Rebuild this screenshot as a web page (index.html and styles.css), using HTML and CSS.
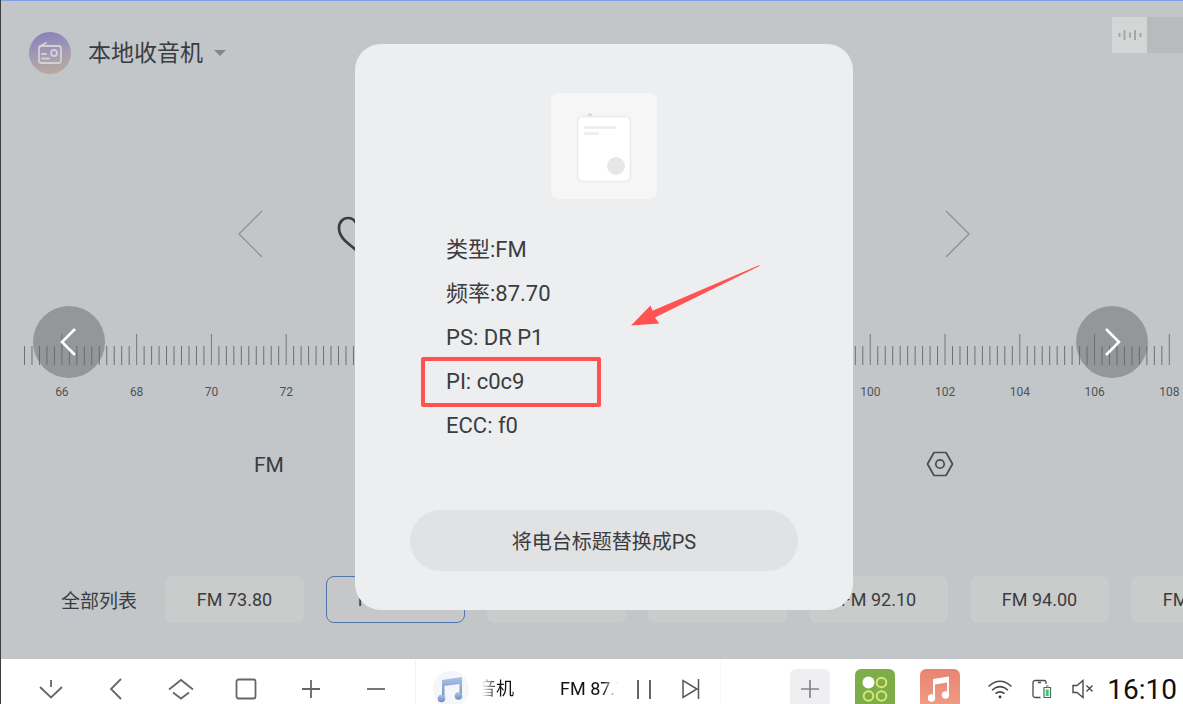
FILE: index.html
```html
<!DOCTYPE html>
<html lang="zh-CN">
<head>
    <meta charset="UTF-8">
    <meta name="viewport" content="width=device-width, initial-scale=1.0">
    <title>本地收音机</title>
    <link rel="stylesheet" href="styles.css">
</head>
<body>
    <main class="screen">
        <header class="header">
            <div class="brand">
                <svg class="brand-logo" viewBox="0 0 42 42" aria-hidden="true">
                    <defs>
                        <linearGradient id="logoFill" x1="0.4" y1="0" x2="0.6" y2="1">
                            <stop offset="0" stop-color="#8a80bd"/>
                            <stop offset="0.5" stop-color="#a39ab2"/>
                            <stop offset="1" stop-color="#bbaa9a"/>
                        </linearGradient>
                    </defs>
                    <circle cx="21" cy="21" r="21" fill="url(#logoFill)"/>
                    <g fill="none" stroke="#d2d0d8" stroke-width="1.8" stroke-linecap="round" stroke-linejoin="round">
                        <rect x="10" y="14" width="22" height="17" rx="2.5"/>
                        <path d="M11 14l6-3M13 22h4M13 26.500h7"/>
                        <circle cx="25" cy="21" r="3"/>
                    </g>
                </svg>
                <select class="source-select" aria-label="音源">
                    <option>本地收音机</option>
                </select>
                <svg class="caret" viewBox="0 0 12 6" aria-hidden="true"><path d="M0 0h12L6 6z" fill="#85888b"/></svg>
            </div>
            <div class="view-switch">
                <button class="view-btn active" type="button" aria-label="波形">
                    <svg width="24" height="12" viewBox="0 0 24 12"><path d="M1.500 4v4M6.500 1v10M12 3.500v5M17 1v10M22.500 4v4" stroke="#a3a5a8" stroke-width="2"/></svg>
                </button>
                <button class="view-btn" type="button" aria-label="列表"></button>
            </div>
        </header>

        <section class="station">
            <button class="icon-btn" type="button" aria-label="上一台">
                <svg width="26" height="48" viewBox="0 0 26 48"><path d="M25 1L2 24l23 23" fill="none" stroke="#93979a" stroke-width="1.500"/></svg>
            </button>
            <button class="icon-btn favorite" type="button" aria-label="收藏">
                <svg width="40" height="40" viewBox="0 0 40 40"><path d="M20 36C15 31 3 25 3 14C3 8 7 4 12 4C16 4 18.500 6 20 9C21.500 6 24 4 28 4C33 4 37 8 37 14C37 25 25 31 20 36Z" fill="none" stroke="#3b3d40" stroke-width="2.700"/></svg>
            </button>
            <button class="icon-btn next" type="button" aria-label="下一台">
                <svg width="26" height="48" viewBox="0 0 26 48"><path d="M1 1l23 23L1 47" fill="none" stroke="#93979a" stroke-width="1.500"/></svg>
            </button>
        </section>

        <section class="dial">
            <svg class="ruler" width="350" height="68" data-from="65" data-to="73.8"></svg>
            <svg class="ruler" width="395" height="68" data-from="98" data-to="108"></svg>
            <button class="page-btn page-prev" type="button" aria-label="向左">
                <svg width="18" height="28" viewBox="0 0 18 28"><path d="M15 1L2 14l13 13" fill="none" stroke="#fff" stroke-width="2.600"/></svg>
            </button>
            <button class="page-btn page-next" type="button" aria-label="向右">
                <svg width="18" height="28" viewBox="0 0 18 28"><path d="M3 1l13 13L3 27" fill="none" stroke="#fff" stroke-width="2.600"/></svg>
            </button>
        </section>

        <section class="controls">
            <button class="band" type="button">FM</button>
            <button class="icon-btn" type="button" aria-label="设置">
                <svg width="28" height="26" viewBox="0 0 28 26" fill="none" stroke="#484b4e" stroke-width="1.700"><path d="M8 1.500h12L26.500 13 20 24.500H8L1.500 13z" stroke-linejoin="round"/><circle cx="14" cy="13" r="4.200"/></svg>
            </button>
        </section>

        <section class="stations">
            <h2 class="stations-title">全部列表</h2>
            <button class="chip" type="button">FM 73.80</button>
            <button class="chip selected" type="button">FM 87.70</button>
            <button class="chip" type="button">FM 89.30</button>
            <button class="chip" type="button">FM 90.00</button>
            <button class="chip" type="button">FM 92.10</button>
            <button class="chip" type="button">FM 94.00</button>
            <button class="chip" type="button">FM 96.60</button>
        </section>

        <div class="overlay">
            <div class="modal" role="dialog" aria-label="电台信息">
                <svg class="cover" viewBox="0 0 106 106" aria-hidden="true">
                    <rect width="106" height="106" rx="8" fill="#f6f6f7"/>
                    <path d="M37 24v-2a2 2 0 0 1 4 0v2z" fill="#d9d9da"/>
                    <rect x="26.500" y="23.500" width="53" height="65" rx="5" fill="#fff" stroke="#ebebec" stroke-width="1.500"/>
                    <path d="M33 34.500h32M33 40.500h15" stroke="#ececed" stroke-width="2.500"/>
                    <circle cx="65" cy="73" r="9" fill="#e7e7e8"/>
                </svg>
                <ul class="info">
                    <li>类型:FM</li>
                    <li>频率:87.70</li>
                    <li>PS: DR P1</li>
                    <li class="marked">PI: c0c9</li>
                    <li>ECC: f0</li>
                </ul>
                <button class="replace-btn" type="button">将电台标题替换成PS</button>
                <svg class="arrow" viewBox="0 0 129 61" aria-hidden="true"><path d="M0 60.500L19.500 40.500l2 5.200L128.500 0v1L24 52.500l4.200 6z" fill="#ff5352"/></svg>
            </div>
        </div>
    </main>

    <footer class="taskbar">
        <nav class="nav">
            <button class="nav-btn" type="button" aria-label="收起">
                <svg viewBox="0 0 26 26"><path d="M13 4v7M2 11l11 10.500L24 11"/></svg>
            </button>
            <button class="nav-btn" type="button" aria-label="返回">
                <svg viewBox="0 0 26 26"><path d="M18 3L8 13l10 10"/></svg>
            </button>
            <button class="nav-btn" type="button" aria-label="主页">
                <svg viewBox="0 0 26 26"><path d="M1 13.500L13 4l12 9.500M5 16.500l8 6 8-6"/></svg>
            </button>
            <button class="nav-btn" type="button" aria-label="最近">
                <svg viewBox="0 0 26 26"><rect x="3.500" y="3.500" width="19" height="19" rx="2"/></svg>
            </button>
            <button class="nav-btn" type="button" aria-label="音量加">
                <svg viewBox="0 0 26 26"><path d="M4 13h18M13 4v18"/></svg>
            </button>
            <button class="nav-btn" type="button" aria-label="音量减">
                <svg viewBox="0 0 26 26"><path d="M4 13h18"/></svg>
            </button>
        </nav>

        <div class="player">
            <svg class="player-logo" viewBox="0 0 36 36" aria-hidden="true">
                <defs>
                    <linearGradient id="noteFill" x1="0" y1="0" x2="0" y2="1">
                        <stop offset="0" stop-color="#a9c4ea"/>
                        <stop offset="1" stop-color="#7189bd"/>
                    </linearGradient>
                </defs>
                <circle cx="18" cy="18" r="18" fill="#f5f6fa"/>
                <g fill="url(#noteFill)">
                    <path d="M9 9l20-3v20h-2.500V13L11.500 15v13H9z"/>
                    <circle cx="8.500" cy="27.500" r="3.800"/>
                    <circle cx="25.500" cy="25" r="3.800"/>
                </g>
            </svg>
            <div class="marquee source"><span>音机</span></div>
            <div class="marquee track"><span>FM 87.70</span></div>
            <button class="icon-btn" type="button" aria-label="暂停">
                <svg width="18" height="20" viewBox="0 0 18 20"><path d="M3 1v19M15 1v19" stroke="#555" stroke-width="1.800"/></svg>
            </button>
            <button class="icon-btn skip" type="button" aria-label="下一首">
                <svg width="18" height="20" viewBox="0 0 18 20"><path d="M1 1.500v17L15 10zM16.500 0v20" fill="none" stroke="#555" stroke-width="1.500"/></svg>
            </button>
        </div>

        <div class="apps">
            <button class="tile tile-add" type="button" aria-label="添加">
                <svg viewBox="0 0 40 40"><path d="M11 20h18M20 11v18" stroke="#84848e" stroke-width="1.700"/></svg>
            </button>
            <button class="tile tile-green" type="button" aria-label="应用">
                <svg viewBox="0 0 40 40"><circle cx="13.500" cy="13.500" r="6" fill="#fff"/><g fill="none" stroke="#d3ec70" stroke-width="2"><circle cx="26.500" cy="13.500" r="4.800"/><circle cx="13.500" cy="27" r="4.800"/><circle cx="26.500" cy="27" r="4.800"/></g></svg>
            </button>
            <button class="tile tile-music" type="button" aria-label="音乐">
                <svg viewBox="0 0 40 40" fill="#fff"><path d="M13 10l16-2.500V26h-2V13.500L15 15.500V29h-2z"/><circle cx="11.500" cy="29" r="3.700"/><circle cx="25.500" cy="26" r="3.700"/></svg>
            </button>
        </div>

        <div class="status">
            <svg width="24" height="20" viewBox="0 0 24 20" aria-hidden="true"><g fill="none" stroke="#4a4a4a" stroke-width="1.500"><path d="M.5 7.500Q12-3 23.500 7.500M4 11.200Q12 4 20 11.200M7.500 14.700Q12 11 16.500 14.700"/></g><circle cx="12" cy="18" r="1.400" fill="#333"/></svg>
            <svg width="20" height="20" viewBox="0 0 20 20" aria-hidden="true"><path d="M8.500 18.500H3a2 2 0 0 1-2-2v-13a2 2 0 0 1 2-2h9a2 2 0 0 1 2 2V5M6 3.500h3" fill="none" stroke="#4a4a4a" stroke-width="1.300"/><path d="M12 8.500h6.500v10H12zM14 7h2.500" fill="#fff" stroke="#357a55" stroke-width="1.200"/><path d="M13.700 10.500h3v6.500h-3z" fill="#45c07c"/></svg>
            <svg width="22" height="20" viewBox="0 0 22 20" aria-hidden="true"><path d="M1 6.500h4l6-5v17l-6-5H1zM14.500 6.500l6 6M20.500 6.500l-6 6" fill="none" stroke="#4a4a4a" stroke-width="1.400"/></svg>
            <time class="clock">16:10</time>
        </div>
    </footer>

    <script src="script.js"></script>
</body>
</html>
```
FILE: styles.css
```css
*, *::after {
    box-sizing: border-box;
}
body {
    font-family: Roboto, "Noto Sans CJK SC", sans-serif;
    background-color: #fff;
    color: #3a3c3f;
    display: flex;
    flex-direction: column;
    height: 100vh;
    margin: 0;
    overflow: hidden;
    border-left: 1px solid #3c3c3e;
}
button, select {
    font-family: inherit;
    color: inherit;
    background: none;
    border: none;
    padding: 0;
    margin: 0;
    cursor: pointer;
}
svg {
    display: block;
    flex: none;
}
.screen {
    flex: 1;
    min-height: 0;
    position: relative;
    overflow: hidden;
    background-color: #c2c6c9;
    border-top: 1px solid #7fa0e6;
}

/* top bar */
.header {
    display: flex;
    justify-content: space-between;
    align-items: flex-start;
    padding: 16px 0 0 28px;
}
.brand {
    display: flex;
    align-items: center;
    margin-top: 15px;
}
.brand-logo {
    width: 42px;
    height: 42px;
    margin-right: 17px;
}
.source-select {
    appearance: none;
    font-size: 23px;
    line-height: 32px;
    padding-top: 2px;
}
.caret {
    width: 12px;
    height: 6px;
    margin-left: 11px;
}
.view-switch {
    display: flex;
    background-color: #b9babe;
}
.view-btn {
    width: 36px;
    height: 36px;
    display: flex;
    align-items: center;
    justify-content: center;
}
.view-btn.active {
    width: 35px;
    background-color: #d4d6d6;
}

.icon-btn {
    display: block;
}
.station {
    display: flex;
    align-items: center;
    margin-top: 136px;
    padding: 0 212px 0 236px;
}
.favorite {
    margin-left: 73px;
}
.next {
    margin-left: auto;
}

/* frequency dial */
.dial {
    display: flex;
    justify-content: space-between;
    position: relative;
    margin-top: 48px;
    padding-top: 28px;
    padding-left: 16px;
}
.ruler text {
    font-size: 12px;
    fill: #505356;
    text-anchor: middle;
}
.page-btn {
    position: absolute;
    top: 0;
    width: 72px;
    height: 72px;
    border-radius: 50%;
    background-color: rgba(100, 104, 104, 0.5);
    display: flex;
    align-items: center;
    justify-content: center;
}
.page-prev {
    left: 32px;
}
.page-next {
    right: 35px;
}

.controls {
    display: flex;
    align-items: flex-start;
    justify-content: space-between;
    margin-top: 49px;
    padding: 0 229px 0 253px;
}
.band {
    font-size: 21px;
    line-height: 28px;
}

/* station list */
.stations {
    display: flex;
    align-items: center;
    gap: 22px;
    margin-top: 97px;
    padding-left: 60px;
}
.stations-title {
    flex: none;
    margin: 0 6px 0 0;
    font-size: 19px;
    font-weight: normal;
}
.chip {
    flex: none;
    width: 139px;
    height: 47px;
    border-radius: 8px;
    background-color: #cacbcb;
    font-size: 18px;
}
.chip.selected {
    background-color: #c5c7c9;
    border: 1px solid #4f74ae;
}

/* station info */
.overlay {
    position: absolute;
    inset: 0;
    display: flex;
    justify-content: center;
    align-items: flex-start;
    padding: 43px 0 0 24px;
}
.modal {
    position: relative;
    width: 498px;
    padding: 49px 55px 39px;
    border-radius: 26px;
    background-color: #edeef0;
}
.cover {
    width: 106px;
    height: 106px;
    margin: 0 auto;
}
.info {
    list-style: none;
    margin: 29px 0 62px;
    padding: 0 0 0 36px;
    font-size: 22px;
    line-height: 44px;
}
.marked {
    position: relative;
}
.marked::after {
    content: "";
    position: absolute;
    top: -3px;
    left: -25px;
    width: 180px;
    height: 50px;
    border: 4px solid #ff5352;
    border-radius: 2px;
}
.replace-btn {
    display: block;
    width: 100%;
    height: 61px;
    border-radius: 31px;
    background-color: #e1e2e4;
    font-size: 20px;
}
.arrow {
    position: absolute;
    left: 276px;
    top: 221px;
    width: 129px;
    height: 61px;
}

/* system bar, its lower edge runs off the screen */
.taskbar {
    flex: 0 0 45px;
    display: flex;
    align-items: flex-start;
    overflow: hidden;
    background-color: #fff;
    color: #111;
}
.nav, .player, .apps, .status {
    display: flex;
    align-items: center;
    height: 60px;
}
.nav {
    padding: 0 7px 0 17px;
}
.nav-btn {
    width: 65px;
    display: flex;
    justify-content: center;
}
.nav-btn svg {
    width: 26px;
    height: 26px;
    fill: none;
    stroke: #666;
    stroke-width: 1.8;
}
.player {
    padding: 0 20px 0 17px;
    border-left: 1px solid #f3f3f3;
    border-right: 1px solid #f8f8f8;
}
.player-logo {
    width: 36px;
    height: 36px;
}
.marquee {
    overflow: hidden;
    white-space: nowrap;
    font-size: 18px;
    line-height: 28px;
}
.source {
    display: flex;
    justify-content: flex-end;
    width: 32px;
    margin: 0 46px 0 13px;
    mask-image: linear-gradient(to right, transparent, #000 16px);
}
.track {
    width: 58px;
    margin-right: 17px;
    mask-image: linear-gradient(to left, transparent, #000 16px);
}
.skip {
    margin-left: 29px;
}
.apps {
    gap: 25px;
    margin-left: auto;
}
.tile {
    width: 40px;
    height: 40px;
    border-radius: 6px;
}
.tile-add {
    background-color: #efeff1;
}
.tile-green {
    background-color: #7dac49;
}
.tile-music {
    background: linear-gradient(#e88572, #f19c86);
}
.status {
    gap: 20px;
    padding: 0 6px 0 28px;
}
.clock {
    margin-left: -7px;
    font-size: 28px;
}
```
FILE: script.js
```javascript
const SVG_NS = 'http://www.w3.org/2000/svg';
const PX_PER_MHZ = 37.38;

function addNode(parent, name, attrs) {
    const node = document.createElementNS(SVG_NS, name);
    for (const key in attrs) {
        node.setAttribute(key, attrs[key]);
    }
    parent.appendChild(node);
    return node;
}

// One tick every 0.2 MHz, a long one with a label every 2 MHz
function drawRuler(svg) {
    const from = Number(svg.dataset.from);
    const to = Number(svg.dataset.to);
    const steps = Math.round((to - from) * 5);
    for (let i = 0; i <= steps; i++) {
        const x = 7 + i * PX_PER_MHZ / 5;
        const tenths = Math.round(from * 10) + i * 2;
        const major = tenths % 20 === 0;
        addNode(svg, 'rect', {
            x: x,
            y: major ? 0 : 12,
            width: 1,
            height: major ? 31 : 19,
            fill: major ? '#75797c' : '#6d7073'
        });
        if (major) {
            addNode(svg, 'text', { x: x + 0.5, y: 62 }).textContent = tenths / 10;
        }
    }
}

document.querySelectorAll('.ruler').forEach(drawRuler);
```
